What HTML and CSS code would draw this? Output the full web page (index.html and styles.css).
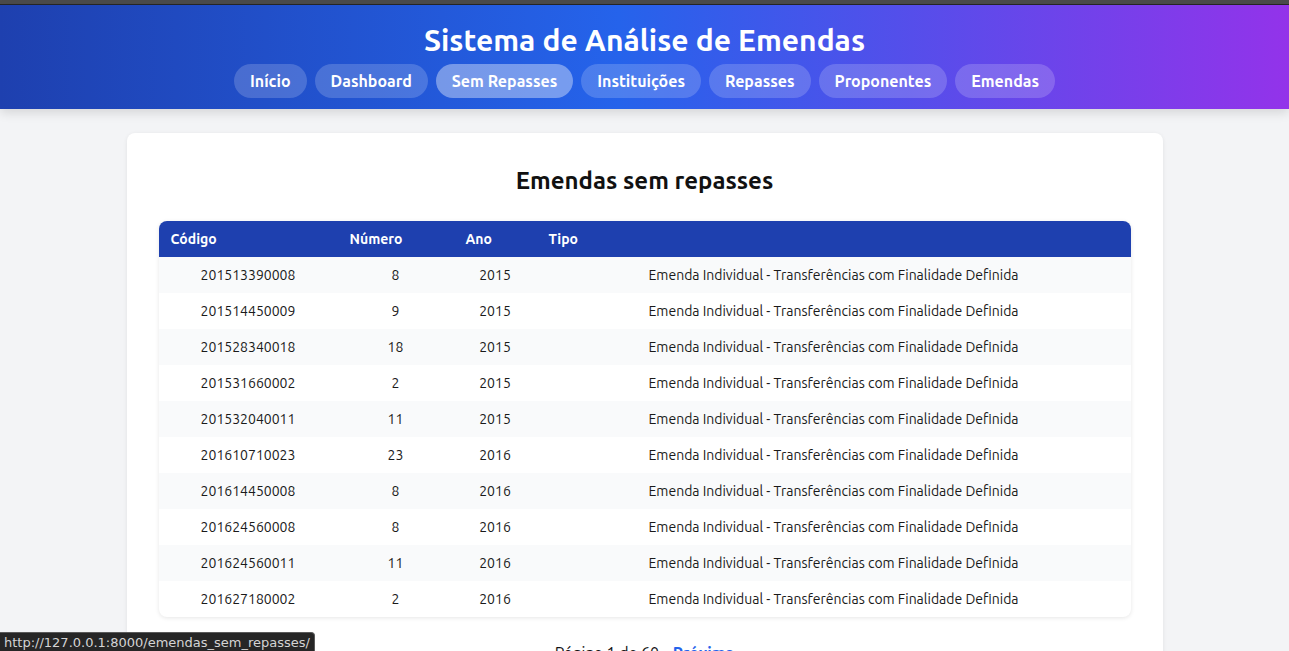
FILE: index.html
```html
<!DOCTYPE html>
<html lang="pt-br">
<head>
<meta charset="utf-8">
<title>Emendas sem repasses</title>
<link rel="stylesheet" href="styles.css">
</head>
<body>
<div class="chrome-strip"></div>
<header class="site-header">
  <h1 class="site-title">Sistema de Análise de Emendas</h1>
  <nav class="nav">
    <a class="nav-pill" href="#">Início</a>
    <a class="nav-pill" href="#">Dashboard</a>
    <a class="nav-pill active" href="#">Sem Repasses</a>
    <a class="nav-pill" href="#">Instituições</a>
    <a class="nav-pill" href="#">Repasses</a>
    <a class="nav-pill" href="#">Proponentes</a>
    <a class="nav-pill" href="#">Emendas</a>
  </nav>
</header>
<main class="main">
  <section class="card">
    <h2 class="card-title">Emendas sem repasses</h2>
    <div class="table-wrap">
      <table class="data-table">
        <colgroup>
          <col class="col-codigo">
          <col class="col-numero">
          <col class="col-ano">
          <col class="col-tipo">
        </colgroup>
        <thead>
          <tr><th>Código</th><th>Número</th><th>Ano</th><th>Tipo</th></tr>
        </thead>
        <tbody>
          <tr><td>201513390008</td><td>8</td><td>2015</td><td>Emenda Individual - Transferências com Finalidade Definida</td></tr>
          <tr><td>201514450009</td><td>9</td><td>2015</td><td>Emenda Individual - Transferências com Finalidade Definida</td></tr>
          <tr><td>201528340018</td><td>18</td><td>2015</td><td>Emenda Individual - Transferências com Finalidade Definida</td></tr>
          <tr><td>201531660002</td><td>2</td><td>2015</td><td>Emenda Individual - Transferências com Finalidade Definida</td></tr>
          <tr><td>201532040011</td><td>11</td><td>2015</td><td>Emenda Individual - Transferências com Finalidade Definida</td></tr>
          <tr><td>201610710023</td><td>23</td><td>2016</td><td>Emenda Individual - Transferências com Finalidade Definida</td></tr>
          <tr><td>201614450008</td><td>8</td><td>2016</td><td>Emenda Individual - Transferências com Finalidade Definida</td></tr>
          <tr><td>201624560008</td><td>8</td><td>2016</td><td>Emenda Individual - Transferências com Finalidade Definida</td></tr>
          <tr><td>201624560011</td><td>11</td><td>2016</td><td>Emenda Individual - Transferências com Finalidade Definida</td></tr>
          <tr><td>201627180002</td><td>2</td><td>2016</td><td>Emenda Individual - Transferências com Finalidade Definida</td></tr>
        </tbody>
      </table>
    </div>
    <div class="pagination">
      <span>Página 1 de 60</span>
      <a class="page-link" href="#">Próxima</a>
    </div>
  </section>
</main>
<div class="status-bar">http://127.0.0.1:8000/emendas_sem_repasses/</div>
</body>
</html>
```

FILE: styles.css
```css
* { box-sizing: border-box; }

html, body {
  margin: 0;
  padding: 0;
}

body {
  background: #f3f4f6;
  font-family: "Ubuntu", "Open Sans", "Noto Sans", sans-serif;
  color: #1f2937;
}

.chrome-strip {
  height: 5px;
  background: #4b4b4b;
  border-bottom: 1px solid #262626;
}

.site-header {
  background: linear-gradient(90deg, #1e40af 0%, #2563eb 48%, #9333ea 100%);
  padding: 17px 0 11px;
  box-shadow: 0 4px 10px rgba(0, 0, 0, 0.12);
  text-align: center;
  color: #fff;
}

.site-title {
  margin: 0 0 6px;
  font-size: 30px;
  line-height: 36px;
  font-weight: 700;
}

.nav {
  display: flex;
  justify-content: center;
  gap: 8px;
}

.nav-pill {
  display: inline-block;
  height: 34px;
  line-height: 34px;
  padding: 0 16px;
  border-radius: 17px;
  background: rgba(255, 255, 255, 0.18);
  color: #fff;
  text-decoration: none;
  font-size: 16px;
  font-weight: 600;
}

.nav-pill.active {
  background: rgba(255, 255, 255, 0.38);
}

.main {
  padding: 24px 0 0;
}

.card {
  width: 1036px;
  margin: 0 auto;
  background: #fff;
  border-radius: 8px;
  box-shadow: 0 1px 4px rgba(0, 0, 0, 0.08);
  padding: 32px 32px 40px;
}

.card-title {
  margin: 0 0 24px;
  text-align: center;
  font-size: 24px;
  line-height: 32px;
  font-weight: 700;
  color: #111;
}

.table-wrap {
  border-radius: 8px;
  overflow: hidden;
  box-shadow: 0 1px 4px rgba(0, 0, 0, 0.1);
}

.data-table {
  width: 100%;
  border-collapse: collapse;
  table-layout: fixed;
  font-size: 14px;
}

.col-codigo { width: 179px; }
.col-numero { width: 116px; }
.col-ano { width: 83px; }

.data-table th {
  background: #1e40af;
  color: #fff;
  text-align: left;
  font-weight: 600;
  height: 36px;
  padding: 0 12px;
  font-size: 14px;
}

.data-table td {
  height: 36px;
  padding: 0 12px;
  text-align: center;
  color: #1a1a1a;
  white-space: nowrap;
}

.data-table tbody tr:nth-child(odd) td {
  background: #f9fafb;
}

.pagination {
  margin-top: 26px;
  text-align: center;
  font-size: 16px;
  line-height: 20px;
  color: #111;
}

.page-link {
  margin-left: 10px;
  color: #2563eb;
  font-weight: 600;
  text-decoration: none;
}

.status-bar {
  position: fixed;
  left: 0;
  bottom: 0;
  height: 19px;
  line-height: 19px;
  padding: 0 4px;
  background: #262626;
  color: #d4d4d4;
  font-size: 13px;
  font-family: "DejaVu Sans", sans-serif;
  border-top-right-radius: 4px;
  border: 1px solid #5a5a5a;
  border-left: 0;
  border-bottom: 0;
}
```
